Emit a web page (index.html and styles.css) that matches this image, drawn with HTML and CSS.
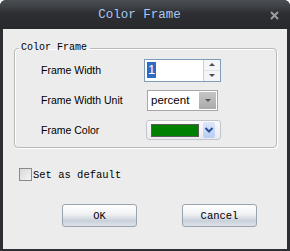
FILE: index.html
```html
<html>
  <head>
    <meta charset="utf-8">
    <title>Color Frame</title>
    <link rel="stylesheet" href="styles.css">
  </head>
  <body>
    <div class="window">
      <div class="titlebar">
        <span class="title">Color Frame</span>
        <span class="close">
          <svg width="9" height="9" viewBox="0 0 9 9">
            <path d="M1 1 L8 8 M8 1 L1 8" stroke="#9a9ea3" stroke-width="2"/>
          </svg>
        </span>
      </div>
      <div class="content">
        <fieldset class="group">
          <legend>Color Frame</legend>
          <div class="form">
            <label>Frame Width</label>
            <div class="spinner">
              <span class="spin-value"><span class="selected">1</span></span>
              <span class="spin-buttons">
                <span class="spin-up"></span>
                <span class="spin-down"></span>
              </span>
            </div>

            <label>Frame Width Unit</label>
            <div class="combo">
              <span class="combo-text">percent</span>
              <span class="combo-button"><span class="arrow"></span></span>
            </div>

            <label>Frame Color</label>
            <div class="colorpick">
              <span class="swatch"></span>
              <span class="chevron">
                <svg width="10" height="8" viewBox="0 0 10 8">
                  <path d="M1.5 2 L5 5.5 L8.5 2" fill="none" stroke="#2f4f9a" stroke-width="2"/>
                </svg>
              </span>
            </div>
          </div>
        </fieldset>

        <div class="check-row">
          <span class="checkbox"></span>
          <span>Set as default</span>
        </div>

        <div class="buttons">
          <button class="btn">OK</button>
          <button class="btn">Cancel</button>
        </div>
      </div>
    </div>
  </body>
</html>
```

FILE: styles.css
```css
body {
  margin: 0;
  background-color: #ffffff;
}

.window {
  width: 290px;
  height: 251px;
  display: flex;
  flex-direction: column;
  background: #2c2e32;
  border-radius: 6px 6px 0 0;
  overflow: hidden;
}

.titlebar {
  height: 29px;
  flex: none;
  display: flex;
  align-items: center;
  background: linear-gradient(#4b4e53, #3c3f44 25%, #2d2f33 45%, #27292c);
}

.title {
  flex: 1;
  text-align: center;
  padding-left: 24px;
  font-family: "Liberation Mono", monospace;
  font-size: 12.5px;
  color: #a9c9f1;
}

.close {
  width: 24px;
  margin-right: 11px;
  display: flex;
  justify-content: flex-end;
  padding-top: 1px;
}

.content {
  flex: 1;
  margin: 0 3px 2px 3px;
  background-color: #ececec;
  padding: 13px 10px 0 11px;
  font-family: "Liberation Mono", monospace;
  font-size: 10px;
  color: #000;
}

.group {
  margin: 0;
  padding: 0 2px 2px 0;
  border: 1px solid #b9b9b9;
  border-radius: 4px;
  box-shadow: inset 1px 1px 0 #fff, 1px 1px 0 #fff;
}

legend {
  margin-left: 4px;
  padding: 0 3px 0 2px;
  line-height: 12px;
  font-family: "Liberation Mono", monospace;
  font-size: 10px;
}

.form {
  display: grid;
  grid-template-columns: 103px auto;
  grid-auto-rows: 30px;
  align-items: center;
  padding-left: 26px;
  padding-top: 1px;
}

.form label {
  font-family: "Liberation Sans", sans-serif;
  font-size: 10.5px;
}

.spinner {
  width: 75px;
  height: 21px;
  display: flex;
  border: 1px solid #7f9db9;
  background: #fff;
}

.spin-value {
  flex: 1;
  display: flex;
  align-items: center;
  padding-left: 2px;
  border-right: 1px solid #c3d0de;
}

.selected {
  background: #316ac5;
  color: #fff;
  font-family: "Liberation Sans", sans-serif;
  font-size: 13px;
  line-height: 16px;
  padding: 0 1px;
}

.spin-buttons {
  width: 16px;
  display: flex;
  flex-direction: column;
  background: #f4f5f7;
}

.spin-up,
.spin-down {
  flex: 1;
  display: flex;
  align-items: center;
  justify-content: center;
}

.spin-up {
  border-bottom: 1px solid #dfe5ec;
}

.spin-up::after {
  content: "";
  border-left: 3px solid transparent;
  border-right: 3px solid transparent;
  border-bottom: 3px solid #4d4d4d;
}

.spin-down::after {
  content: "";
  border-left: 3px solid transparent;
  border-right: 3px solid transparent;
  border-top: 3px solid #4d4d4d;
}

.combo {
  width: 69px;
  height: 19px;
  margin-left: 3px;
  display: flex;
  border: 1px solid #a7a7a7;
  background: #fff;
}

.combo-text {
  flex: 1;
  padding-left: 3px;
  line-height: 19px;
  font-family: "Liberation Sans", sans-serif;
  font-size: 11.5px;
}

.combo-button {
  width: 17px;
  margin: 1px;
  display: flex;
  align-items: center;
  justify-content: center;
  background: linear-gradient(#c4c5c7, #a9abae);
}

.arrow {
  border-left: 3px solid transparent;
  border-right: 3px solid transparent;
  border-top: 3px solid #555;
}

.colorpick {
  height: 20px;
  margin-left: 2px;
  display: flex;
  align-items: center;
  gap: 4px;
  padding-left: 4px;
  box-sizing: border-box;
  width: 75px;
  border: 1px solid #c2c6cc;
  border-radius: 3px;
  background: linear-gradient(#fbfbfb, #e9eaec);
}

.swatch {
  width: 46px;
  height: 11px;
  background: #008000;
  border: 1px solid #5a5a5a;
}

.chevron {
  width: 12px;
  height: 16px;
  display: flex;
  align-items: center;
  justify-content: center;
  background: linear-gradient(#dce7fb, #b7cdf4);
  border-radius: 2px;
}

.check-row {
  display: flex;
  align-items: center;
  gap: 1px;
  margin-top: 20px;
  padding-left: 5px;
  font-size: 10.5px;
}

.checkbox {
  width: 11px;
  height: 11px;
  border: 1px solid #8a8a8a;
  background: linear-gradient(135deg, #d9d9d9, #f4f4f4);
}

.buttons {
  display: flex;
  gap: 45px;
  margin-top: 23px;
  padding-left: 48px;
}

.btn {
  width: 75px;
  height: 23px;
  padding: 0;
  border: 1px solid #9ba3ad;
  border-radius: 3px;
  background: linear-gradient(#ffffff, #eef0f3 45%, #c9d1db 75%, #dde2e8);
  font-family: "Liberation Mono", monospace;
  font-size: 10.5px;
  color: #000;
}
```
